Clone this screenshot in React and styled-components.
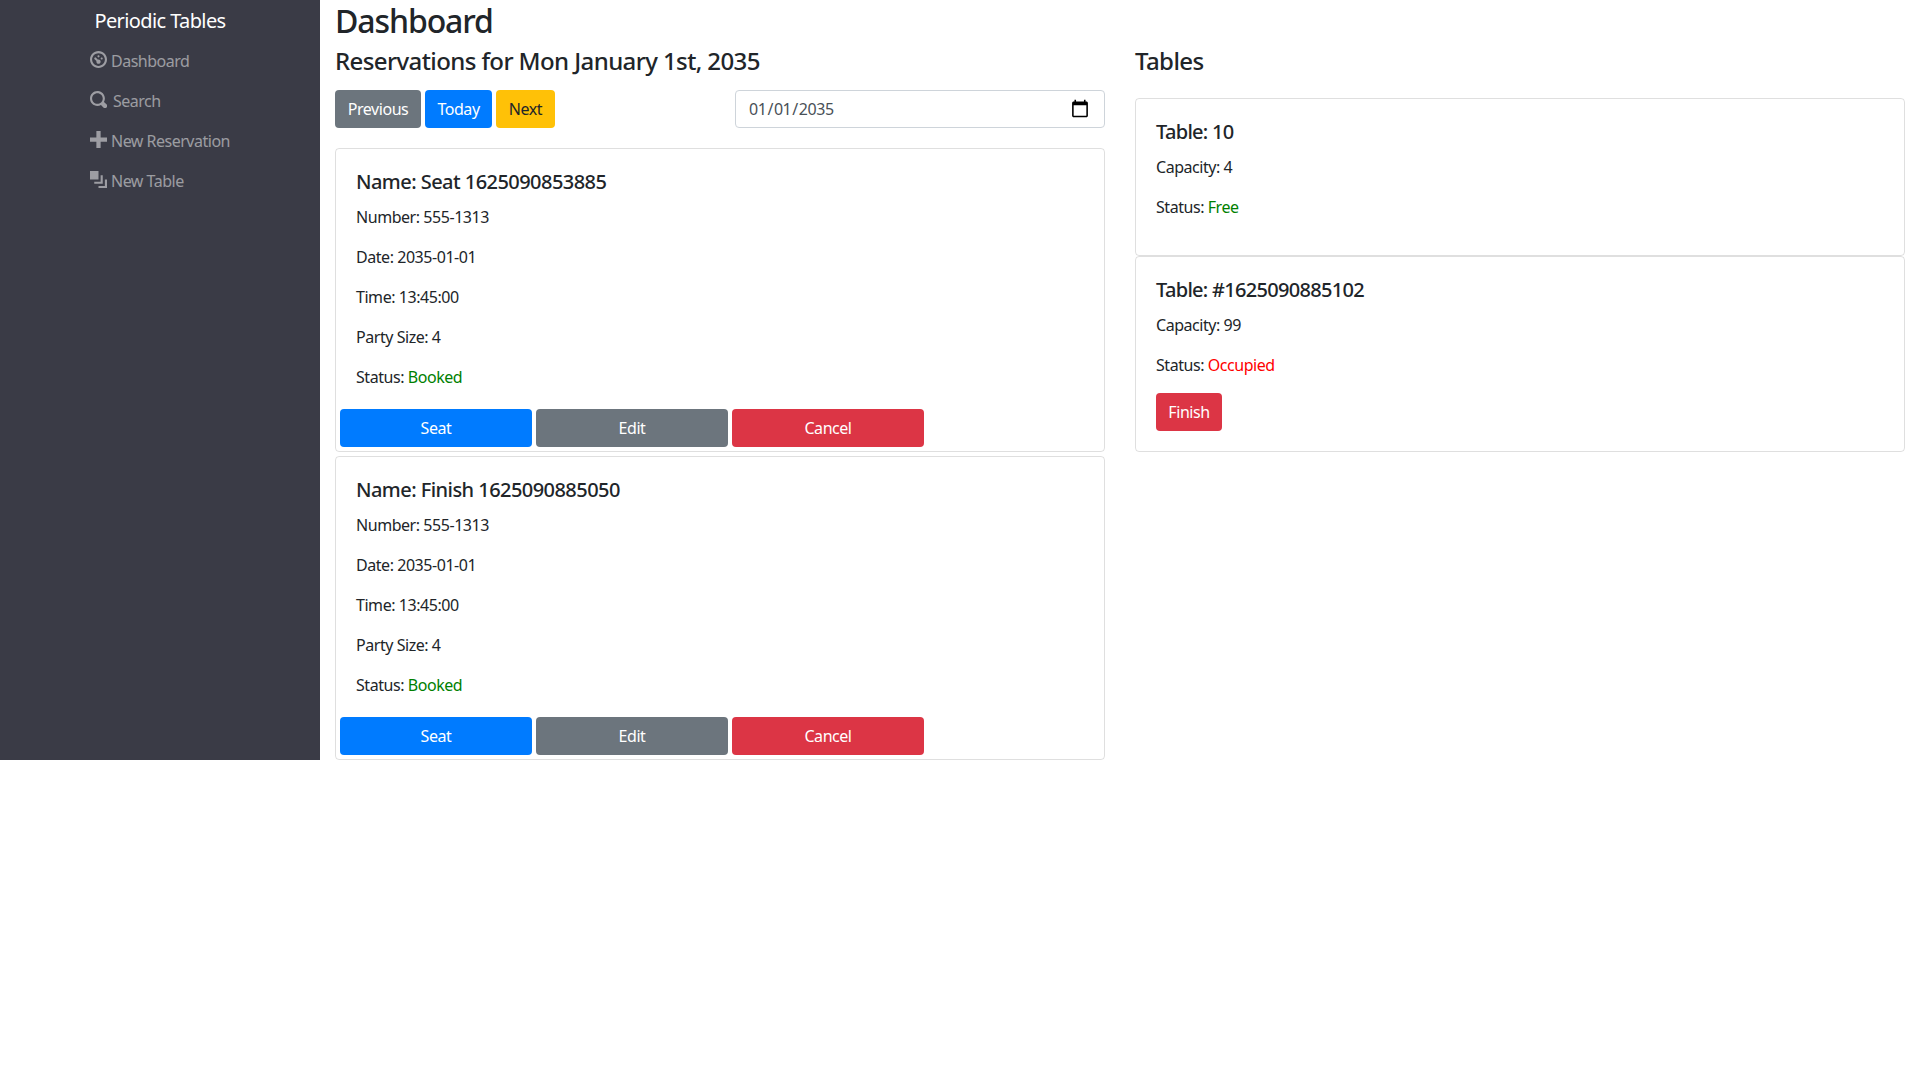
import React from "react";
import styled, { createGlobalStyle } from "styled-components";

const GlobalStyle = createGlobalStyle`
  * {
    box-sizing: border-box;
  }

  body {
    margin: 0;
    background: #fff;
    color: #212529;
    font-family: "Noto Sans", "Open Sans", sans-serif;
    font-size: 16px;
    line-height: 24px;
    letter-spacing: -0.45px;
  }
`;

const Layout = styled.div`
  display: flex;
  align-items: stretch;
`;

const Sidebar = styled.nav`
  width: 320px;
  flex-shrink: 0;
  background: #3a3b46;
`;

const Brand = styled.div`
  padding-top: 6px;
  height: 41px;
  text-align: center;
  font-size: 20px;
  line-height: 30px;
  letter-spacing: -0.6px;
  color: #fff;
`;

const NavList = styled.ul`
  list-style: none;
  margin: 0;
  padding: 0;
`;

const NavItem = styled.li`
  display: flex;
  align-items: center;
  height: 40px;
  padding-left: 90px;
  letter-spacing: -0.5px;
  color: rgba(255, 255, 255, 0.5);
`;

const NavIcon = styled.svg`
  width: 17px;
  height: 17px;
  margin-right: ${({ $gap }) => $gap}px;
  margin-top: -3px;
  fill: currentColor;
`;

const Main = styled.main`
  flex: 1;
  padding: 0 15px;
`;

const PageTitle = styled.h1`
  margin: 0;
  font-size: 32px;
  line-height: 42px;
  font-weight: 500;
  letter-spacing: -1.1px;
`;

const Columns = styled.div`
  display: grid;
  grid-template-columns: 770px 770px;
  gap: 30px;
`;

const SectionTitle = styled.h4`
  margin: 4px 0 0;
  font-size: 24px;
  line-height: 29px;
  font-weight: 500;
  letter-spacing: -0.6px;
`;

const Controls = styled.div`
  display: flex;
  justify-content: space-between;
  margin: 15px 0 20px;
`;

const ButtonGroup = styled.div`
  display: flex;
  gap: 4px;
`;

const Button = styled.button`
  display: block;
  width: ${({ $width }) => $width}px;
  height: 38px;
  padding: 0;
  border: 0;
  border-radius: 4px;
  font: inherit;
  letter-spacing: inherit;
  background: ${({ $tone }) => $tone};
  color: ${({ $dark }) => ($dark ? "#212529" : "#fff")};
`;

const DateInput = styled.input`
  width: 370px;
  height: 38px;
  padding: 6px 12px;
  border: 1px solid #ced4da;
  border-radius: 4px;
  font: inherit;
  letter-spacing: inherit;
  color: #495057;
  background: #fff;

  &::-webkit-calendar-picker-indicator {
    width: 20px;
    height: 20px;
    margin-right: 2px;
    padding: 0;
  }
`;

const Card = styled.section`
  border: 1px solid rgba(0, 0, 0, 0.125);
  border-radius: 4px;
  margin-bottom: ${({ $spaced }) => ($spaced ? "4px" : "0")};

  &:last-child {
    margin-bottom: 0;
  }
`;

const CardBody = styled.div`
  padding: 20px 20px ${({ $compact }) => ($compact ? "0" : "20px")};
`;

const CardTitle = styled.h5`
  margin: 0 0 11px;
  padding-top: 1px;
  font-size: 20px;
  line-height: 24px;
  font-weight: 500;
  letter-spacing: ${({ $tight }) => ($tight ? "-0.7px" : "-0.55px")};
`;

const Line = styled.p`
  margin: 0 0 16px;
`;

const Status = styled.span`
  color: ${({ $tone }) => $tone};
`;

const CardActions = styled.div`
  display: flex;
  gap: 4px;
  padding: 4px;
`;

const TableList = styled.div`
  margin-top: 23px;
`;

const reservations = [
  { name: "Seat 1625090853885" },
  { name: "Finish 1625090885050" },
];

const navLinks = [
  {
    label: "Dashboard",
    gap: 4,
    path: "M4 0c-2.2 0-4 1.8-4 4s1.8 4 4 4 4-1.8 4-4-1.8-4-4-4zm0 1c1.66 0 3 1.34 3 3s-1.34 3-3 3-3-1.34-3-3 1.34-3 3-3zm0 1c-.28 0-.5.22-.5.5s.22.5.5.5.5-.22.5-.5-.22-.5-.5-.5zm-1.66 1a.5.5 0 0 0-.19.84l.91.91c-.02.08-.06.16-.06.25 0 .55.45 1 1 1s1-.45 1-1-.45-1-1-1c-.09 0-.17.04-.25.06l-.91-.91a.5.5 0 0 0-.44-.16.5.5 0 0 0-.06 0zm3.16 0c-.28 0-.5.22-.5.5s.22.5.5.5.5-.22.5-.5-.22-.5-.5-.5z",
  },
  {
    label: "Search",
    gap: 6,
    path: "M3.5 0c-1.93 0-3.5 1.57-3.5 3.5s1.57 3.5 3.5 3.5c.59 0 1.17-.14 1.66-.41a1 1 0 0 0 .13.13l1 1a1.02 1.02 0 1 0 1.44-1.44l-1-1a1 1 0 0 0-.16-.13c.27-.49.44-1.06.44-1.66 0-1.93-1.57-3.5-3.5-3.5zm0 1c1.39 0 2.5 1.11 2.5 2.5 0 .66-.24 1.27-.66 1.72-.01.01-.02.02-.03.03a1 1 0 0 0-.13.13c-.44.4-1.04.63-1.69.63-1.39 0-2.5-1.11-2.5-2.5s1.11-2.5 2.5-2.5z",
  },
  {
    label: "New Reservation",
    gap: 4,
    path: "M3 0v3h-3v2h3v3h2v-3h3v-2h-3v-3h-2z",
  },
  {
    label: "New Table",
    gap: 4,
    path: "M0 0v4h4v-4h-4zm5 2v3h-3v1h4v-4h-1zm2 2v3h-3v1h4v-4h-1z",
  },
];

function ReservationCard({ name }) {
  return (
    <Card $spaced>
      <CardBody $compact>
        <CardTitle>Name: {name}</CardTitle>
        <Line>Number: 555-1313</Line>
        <Line>Date: 2035-01-01</Line>
        <Line>Time: 13:45:00</Line>
        <Line>Party Size: 4</Line>
        <Line>
          Status: <Status $tone="#008000">Booked</Status>
        </Line>
      </CardBody>
      <CardActions>
        <Button $width={192} $tone="#007bff">Seat</Button>
        <Button $width={192} $tone="#6c757d">Edit</Button>
        <Button $width={192} $tone="#dc3545">Cancel</Button>
      </CardActions>
    </Card>
  );
}

export default function App() {
  return (
    <>
      <GlobalStyle />
      <Layout>
        <Sidebar>
          <Brand>Periodic Tables</Brand>
          <NavList>
            {navLinks.map(link => (
              <NavItem key={link.label}>
                <NavIcon viewBox="0 0 8 8" $gap={link.gap}>
                  <path d={link.path} />
                </NavIcon>
                {link.label}
              </NavItem>
            ))}
          </NavList>
        </Sidebar>
        <Main>
          <PageTitle>Dashboard</PageTitle>
          <Columns>
            <div>
              <SectionTitle>Reservations for Mon January 1st, 2035</SectionTitle>
              <Controls>
                <ButtonGroup>
                  <Button $width={86} $tone="#6c757d">Previous</Button>
                  <Button $width={67} $tone="#007bff">Today</Button>
                  <Button $width={59} $dark $tone="#ffc107">Next</Button>
                </ButtonGroup>
                <DateInput type="date" defaultValue="2035-01-01" />
              </Controls>
              {reservations.map(reservation => (
                <ReservationCard key={reservation.name} name={reservation.name} />
              ))}
            </div>
            <div>
              <SectionTitle>Tables</SectionTitle>
              <TableList>
                <Card>
                  <CardBody>
                    <CardTitle $tight>Table: 10</CardTitle>
                    <Line>Capacity: 4</Line>
                    <Line>
                      Status: <Status $tone="#008000">Free</Status>
                    </Line>
                  </CardBody>
                </Card>
                <Card>
                  <CardBody>
                    <CardTitle $tight>Table: #1625090885102</CardTitle>
                    <Line>Capacity: 99</Line>
                    <Line>
                      Status: <Status $tone="#ff0000">Occupied</Status>
                    </Line>
                    <Button $width={66} $tone="#dc3545">Finish</Button>
                  </CardBody>
                </Card>
              </TableList>
            </div>
          </Columns>
        </Main>
      </Layout>
    </>
  );
}
